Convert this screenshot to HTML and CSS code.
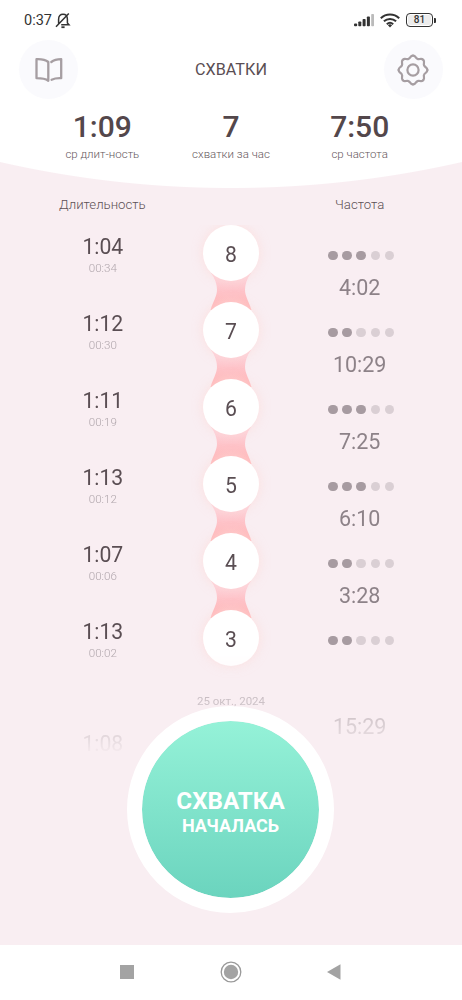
FILE: index.html
```
<!DOCTYPE html>
<html lang="ru">
<head>
<meta charset="utf-8">
<title>Схватки</title>
<link rel="stylesheet" href="styles.css">
</head>
<body>
<div class="screen">
  <header class="header">
    <div class="status">
      <span class="clock">0:37</span>
      <svg class="bell" width="16" height="17" viewBox="0 0 16 17" fill="none" stroke="#333" stroke-width="1.5"><path d="M3.6 12.2V7.2C3.6 4 5.4 2.3 8 2.3s4.400 1.700 4.400 4.900v3.700l1.600 1.900H6.200M1 14.700 13.800 1.400"/><path d="M6.400 15.200h3.200" stroke-width="1.800"/></svg>
      <svg class="signal" width="21" height="14" viewBox="0 0 21 14" fill="#333"><rect x="0" y="10.500" width="3.200" height="2.700" rx="1"/><rect x="4.300" y="8.500" width="3" height="4.700" rx=".8"/><rect x="8.600" y="6" width="3" height="7.200" rx=".8"/><rect x="12.900" y="3.500" width="3" height="9.700" rx=".8"/><rect x="17.200" y="1" width="2.800" height="12.200" rx=".8" fill="#bbb"/></svg>
      <svg class="wifi" width="20" height="15" viewBox="0 0 20 15" fill="none" stroke="#333" stroke-width="2"><path d="M.8 5.300a13.300 13.300 0 0 1 18.400 0M3.900 8.300a9 9 0 0 1 12.200 0M6.800 11.200a4.900 4.900 0 0 1 6.400 0"/><path d="m7.900 12.200 2.100 2.400 2.100-2.400a3.200 3.200 0 0 0-4.200 0Z" fill="#333" stroke="none"/></svg>
      <span class="battery">81</span><span class="battery-tip"></span>
    </div>
    <div class="toolbar">
      <button class="round"><svg width="28" height="26" viewBox="0 0 28 26" fill="none" stroke="#a69ea2" stroke-width="2.300" stroke-linecap="round" stroke-linejoin="round"><path d="M1.500 2.200C6.500 2 10.500 2.700 13.300 5v18.800C10.400 21.700 6.700 21.200 1.500 21.200ZM16.300 5c2.500-2 5.400-2.800 9.900-2.800v19c-4-.2-7 .3-9.600 1.500"/></svg></button>
      <h1 class="title">СХВАТКИ</h1>
      <button class="round"><svg width="32" height="32" viewBox="-16 -16 32 32" fill="none" stroke="#a69ea2" stroke-width="2.200" stroke-linecap="round">
        <defs><path id="tooth" d="M0-14.400C3-14.400 2.400-11.800 4.600-11.100 6.650-10.040 8.060-12.300 10.180-10.180"/></defs>
        <circle r="5.600"/>
        <use href="#tooth"/><use href="#tooth" transform="rotate(45)"/><use href="#tooth" transform="rotate(90)"/><use href="#tooth" transform="rotate(135)"/><use href="#tooth" transform="rotate(180)"/><use href="#tooth" transform="rotate(225)"/><use href="#tooth" transform="rotate(270)"/><use href="#tooth" transform="rotate(315)"/>
      </svg></button>
    </div>
    <div class="stats cols">
      <div><b>1:09</b><span>ср длит-ность</span></div>
      <div><b>7</b><span>схватки за час</span></div>
      <div><b>7:50</b><span>ср частота</span></div>
    </div>
  </header>
  <main class="main">
    <div class="heads cols"><span>Длительность</span><span></span><span>Частота</span></div>
    <svg width="0" height="0" class="defs"><defs>
      <linearGradient id="link" x1="0" y1="0" x2="0" y2="1"><stop offset=".15" stop-color="#fdd0d8"/><stop offset=".9" stop-color="#ffb5b7"/></linearGradient>
      <symbol id="neck" viewBox="0 0 48 37"><path d="M4 0C8 6 10 11 10 17 10 23 6 29 3.500 37H44.500C42 29 38 23 38 17 38 11 40 6 44 0Z" fill="url(#link)"/></symbol>
    </defs></svg>
    <div class="list">
      <div class="row cols">
        <div class="len"><b>1:04</b><span>00:34</span></div>
        <div class="chain"><i>8</i><svg class="neck"><use href="#neck"/></svg></div>
        <div class="freq"><p class="dots"><i class="on"></i><i class="on"></i><i class="on"></i><i></i><i></i></p><b>4:02</b></div>
      </div>
      <div class="row cols">
        <div class="len"><b>1:12</b><span>00:30</span></div>
        <div class="chain"><i>7</i><svg class="neck"><use href="#neck"/></svg></div>
        <div class="freq"><p class="dots"><i class="on"></i><i class="on"></i><i></i><i></i><i></i></p><b>10:29</b></div>
      </div>
      <div class="row cols">
        <div class="len"><b>1:11</b><span>00:19</span></div>
        <div class="chain"><i>6</i><svg class="neck"><use href="#neck"/></svg></div>
        <div class="freq"><p class="dots"><i class="on"></i><i class="on"></i><i class="on"></i><i></i><i></i></p><b>7:25</b></div>
      </div>
      <div class="row cols">
        <div class="len"><b>1:13</b><span>00:12</span></div>
        <div class="chain"><i>5</i><svg class="neck"><use href="#neck"/></svg></div>
        <div class="freq"><p class="dots"><i class="on"></i><i class="on"></i><i class="on"></i><i></i><i></i></p><b>6:10</b></div>
      </div>
      <div class="row cols">
        <div class="len"><b>1:07</b><span>00:06</span></div>
        <div class="chain"><i>4</i><svg class="neck"><use href="#neck"/></svg></div>
        <div class="freq"><p class="dots"><i class="on"></i><i class="on"></i><i></i><i></i><i></i></p><b>3:28</b></div>
      </div>
      <div class="row cols">
        <div class="len"><b>1:13</b><span>00:02</span></div>
        <div class="chain"><i>3</i></div>
        <div class="freq"><p class="dots"><i class="on"></i><i class="on"></i><i></i><i></i><i></i></p></div>
      </div>
      <div class="older cols">
        <div class="older-len">1:08</div>
        <div class="date">25 окт., 2024</div>
        <div class="older-freq">15:29</div>
      </div>
    </div>
    <button class="start"><b>СХВАТКА</b><span>НАЧАЛАСЬ</span></button>
  </main>
  <nav class="nav">
    <svg width="24" height="24" viewBox="0 0 24 24"><path fill="#a3a3a3" d="M5 5h14v14H5z"/></svg>
    <svg width="24" height="24" viewBox="0 0 24 24"><circle cx="12" cy="12" r="7.200" fill="#a3a3a3"/><circle cx="12" cy="12" r="9.800" fill="none" stroke="#999" stroke-width="1.300"/></svg>
    <svg width="24" height="24" viewBox="0 0 24 24"><path fill="#a3a3a3" d="M4 12 17.500 4.300v15.400z"/></svg>
  </nav>
</div>
</body>
</html>
```
FILE: styles.css
```
* { box-sizing: border-box; margin: 0; }
body { font-family: Roboto, "Liberation Sans", sans-serif; background: #fff; color: #5a4e53; }
b, i { font-weight: 400; font-style: normal; }
button { border: 0; padding: 0; font: inherit; }
.screen { width: 462px; height: 1000px; display: flex; flex-direction: column; overflow: hidden; }
.cols { display: grid; grid-template-columns: repeat(3, 1fr); padding: 0 38px; text-align: center; }

.header { height: 190px; background: radial-gradient(circle 1039px at 50% -851px, #fff 1038.500px, #f9eef2 1039.500px); }
.status { height: 40px; padding: 0 29px 0 24px; display: flex; align-items: center; }
.clock { font-size: 14.500px; color: #333; }
.bell { margin-left: 3px; }
.signal { margin-left: auto; margin-right: 5px; }
.wifi { margin-right: 6px; }
.battery { width: 27px; height: 14px; border: 1.500px solid #333; border-radius: 4px; font-size: 10px; font-weight: 500; line-height: 12px; color: #333; text-align: center; background: #ececec; box-shadow: inset 0 0 0 1px #fff; }
.battery-tip { width: 2px; height: 5px; margin-left: 1px; margin-right: -3px; background: #333; border-radius: 0 1px 1px 0; }
.toolbar { height: 59px; padding: 0 19px; display: flex; align-items: center; justify-content: space-between; }
.round { width: 59px; height: 59px; border-radius: 50%; background: #fafafd; display: grid; place-items: center; }
.title { font-size: 16.200px; font-weight: 400; line-height: 20px; }
.stats { padding-top: 9px; }
.stats b { display: block; font-size: 30px; line-height: 38px; font-weight: 500; color: #53474b; }
.stats span { display: block; font-size: 11.500px; line-height: 16px; font-weight: 300; color: #65585d; }

.main { flex: 0 0 755px; background: #f9eef2; display: flex; flex-direction: column; align-items: center; }
.cols.heads, .list { width: 462px; }
.heads { font-size: 13.200px; line-height: 20px; height: 35px; padding-top: 5px; font-weight: 300; color: #5c5055; }
.defs { position: absolute; }
.list { height: 532px; overflow: hidden; flex: none; -webkit-mask-image: linear-gradient(#000 425px, transparent 530px); mask-image: linear-gradient(#000 425px, transparent 530px); }
.row { height: 77px; }
.len { padding: 9px 0 0 1px; }
.len b { display: block; font-size: 21.200px; line-height: 25px; }
.len span { display: block; font-size: 11.600px; line-height: 14px; margin-top: 2px; font-weight: 300; color: #b0a6ac; }
.chain { display: flex; flex-direction: column; align-items: center; }
.chain i { width: 56px; height: 56px; flex: none; border-radius: 50%; background: #fff; box-shadow: 0 0 9px 2px #fddcda90; font-size: 21.200px; line-height: 59px; position: relative; z-index: 1; }
.neck { width: 48px; height: 37px; margin: -8px 0; flex: none; }
.freq { padding-top: 25px; }
.dots { display: flex; justify-content: center; gap: 4.700px; padding-left: 3px; }
.dots i { width: 9.400px; height: 9.400px; border-radius: 50%; background: #dacfd4; margin-top: .5px; }
.dots .on { background: #a79ba1; }
.freq b { display: block; font-size: 21.500px; line-height: 25px; margin-top: 15px; color: #8d8288; }
.older { line-height: 26px; }
.older-len { font-size: 21.200px; padding: 44px 0 0 1px; color: #7d7278; }
.older-freq { font-size: 21.500px; padding-top: 27px; color: #8d8288; }
.date { font-size: 11.500px; line-height: 16px; padding-top: 6px; color: #a0969c; }

.start { width: 207px; height: 207px; margin: -51px 0 0 -1px; flex: none; position: relative; z-index: 2; border: 15.500px solid #fff; border-radius: 50%; background: linear-gradient(#95f2d8, #6bd4be) padding-box; color: #fff; display: flex; flex-direction: column; align-items: center; justify-content: center; }
.start b { font-size: 24.200px; line-height: 28px; font-weight: 700; padding-top: 5px; }
.start span { font-size: 18px; line-height: 22px; font-weight: 700; }

.nav { height: 54px; display: flex; justify-content: center; align-items: center; gap: 80px; }
```
